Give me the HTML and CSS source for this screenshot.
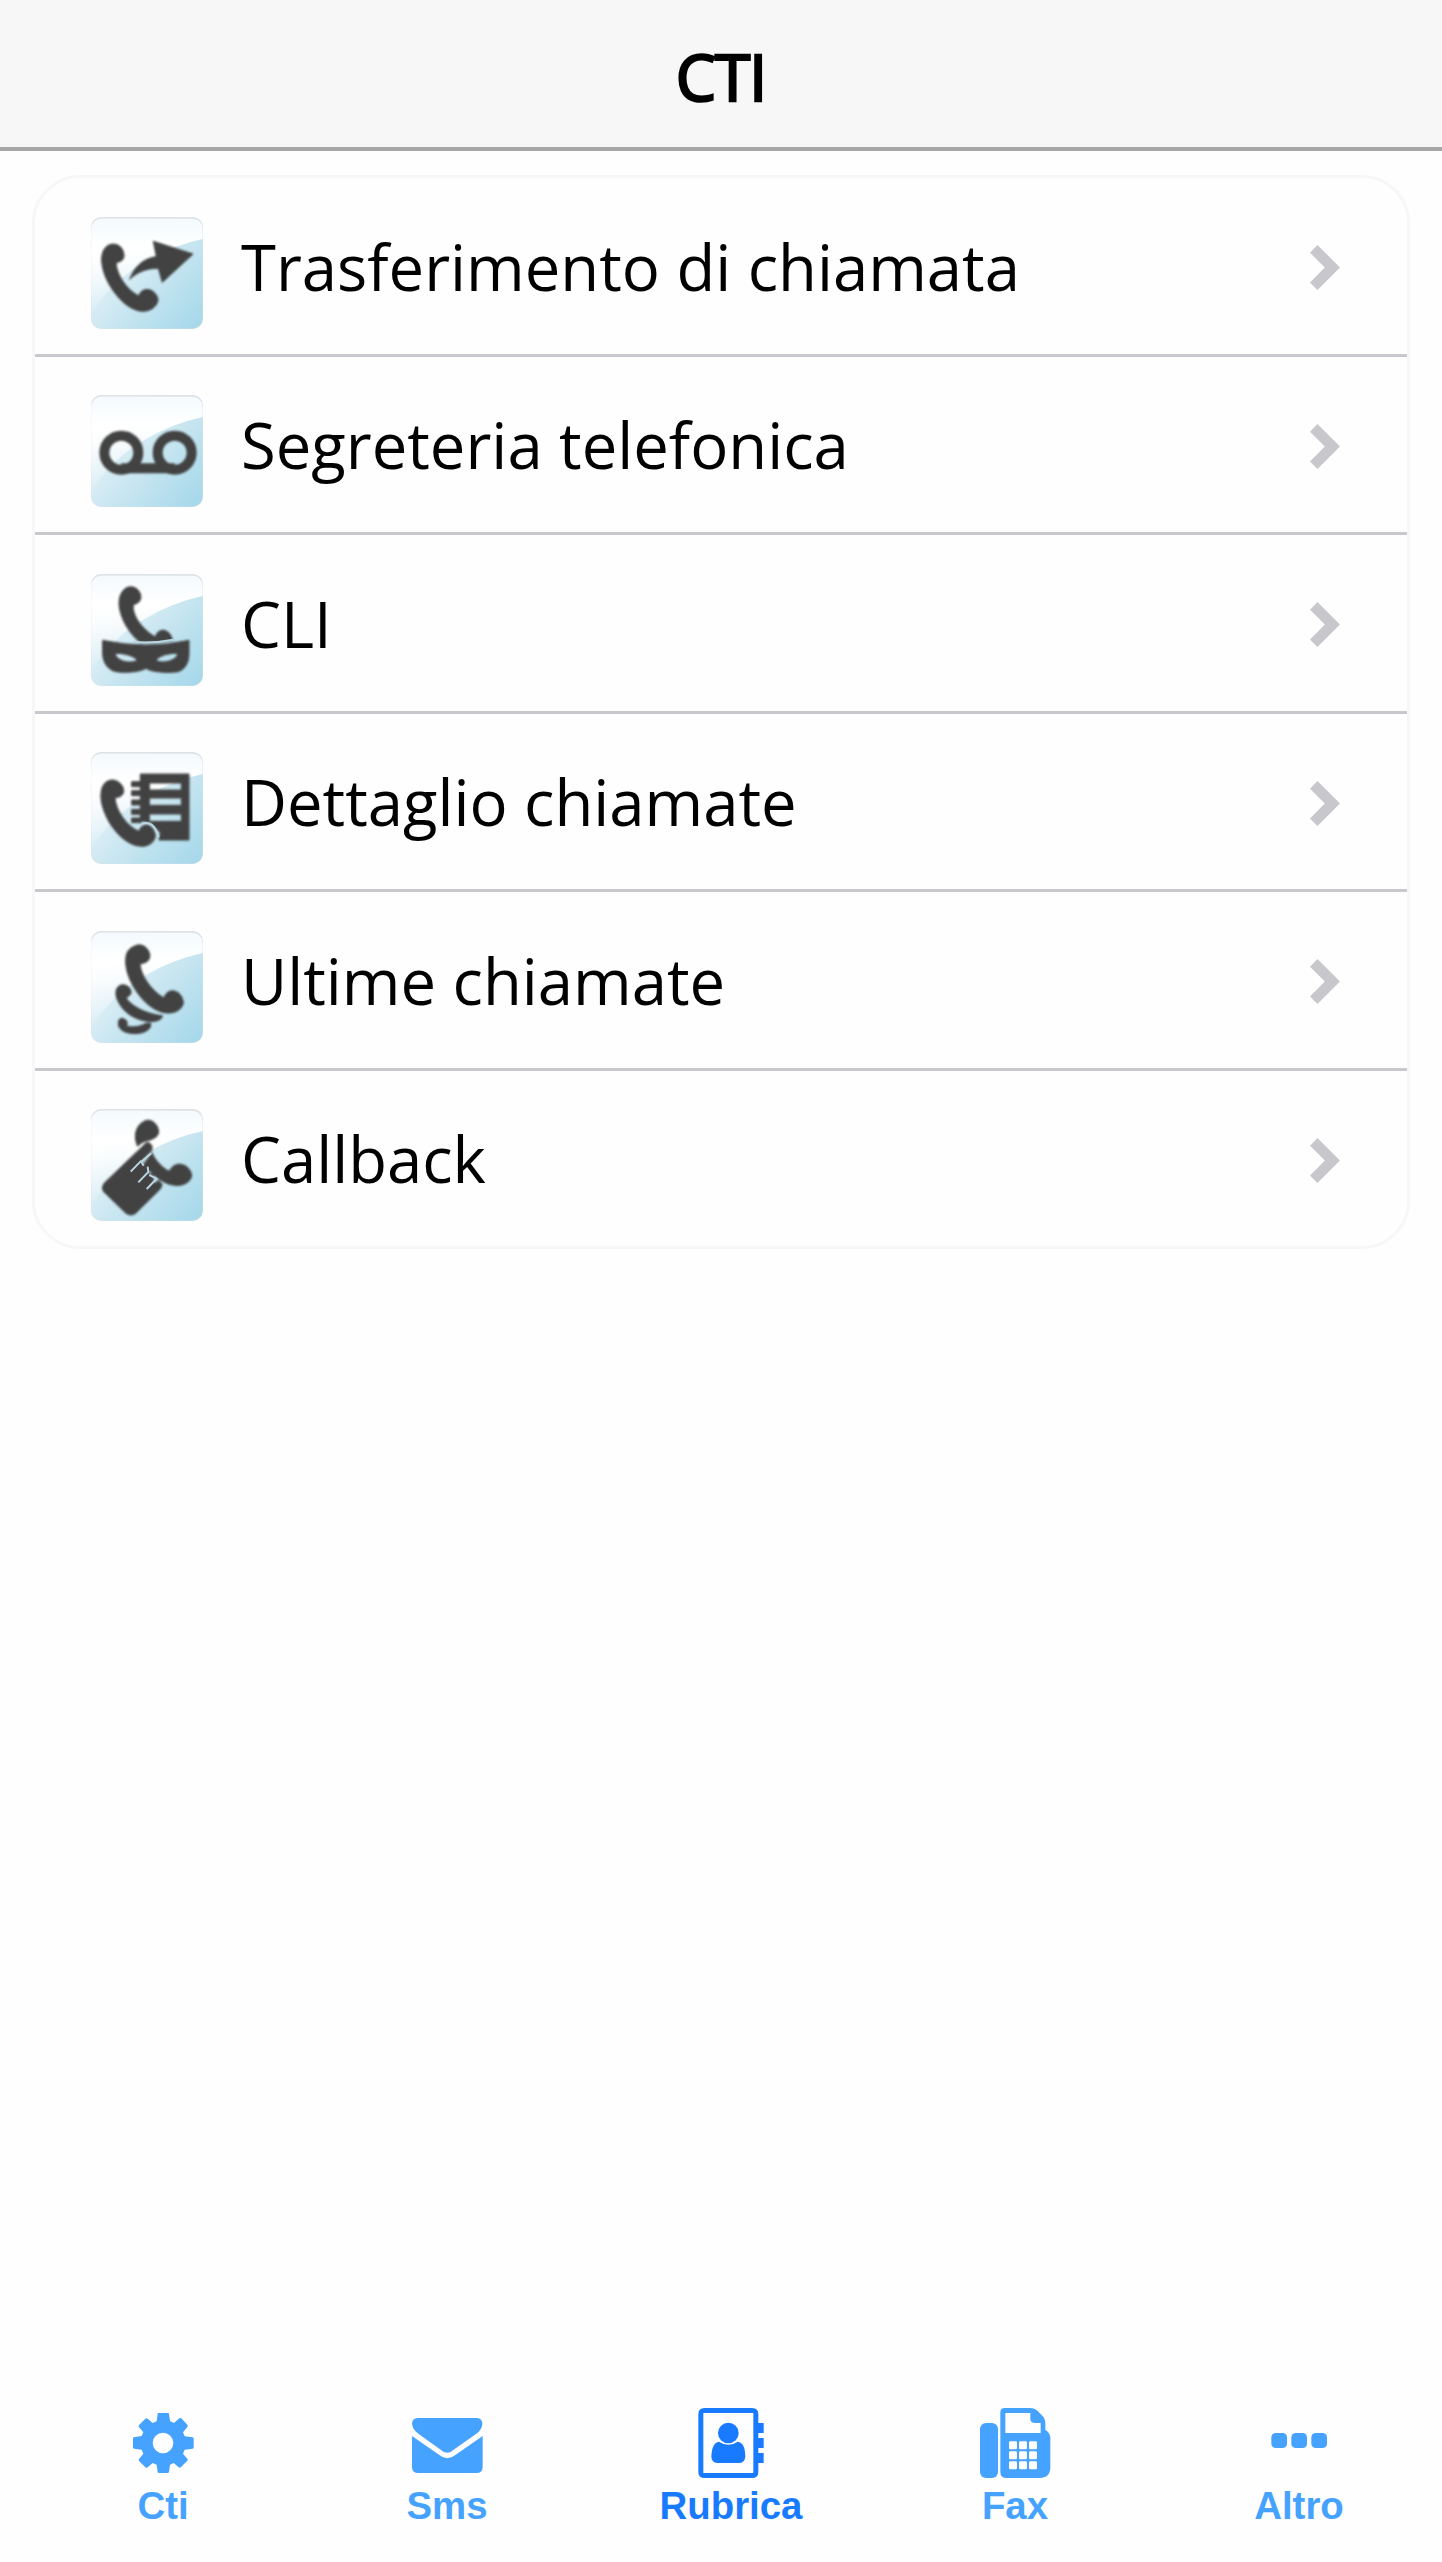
FILE: index.html
```html
<!DOCTYPE html>
<html lang="it">
<head>
    <meta charset="UTF-8">
    <meta name="viewport" content="width=device-width, initial-scale=1.0">
    <title>CTI</title>
    <link rel="stylesheet" href="styles.css">
</head>
<body>
    <!-- Sfondo comune delle icone -->
    <svg class="defs" width="0" height="0">
        <defs>
            <linearGradient id="sky" x1="0.1" y1="0.2" x2="1" y2="1">
                <stop offset="0" stop-color="#eef7fb"/>
                <stop offset="0.45" stop-color="#cbe7f1"/>
                <stop offset="1" stop-color="#a3d7ea"/>
            </linearGradient>
            <linearGradient id="gloss" x1="0" y1="0" x2="0" y2="1">
                <stop offset="0" stop-color="#f4fafd"/>
                <stop offset="0.3" stop-color="#fff"/>
                <stop offset="0.45" stop-color="#fff" stop-opacity="0.85"/>
                <stop offset="1" stop-color="#fff" stop-opacity="0"/>
            </linearGradient>
            <symbol id="tile" viewBox="33 37 336 336">
                <rect x="33" y="37" width="336" height="336" rx="30" fill="#dfe3e5"/>
                <rect x="34" y="42" width="334" height="330" rx="32" fill="url(#sky)"/>
                <path d="M34 74Q36 42 66 42H336Q366 42 368 74V103Q280 122 200 168Q90 230 34 330Z" fill="url(#gloss)"/>
            </symbol>
            <symbol id="chevron" viewBox="331 286 89 134">
                <path d="M353 286L420 353L353 420L331 398L375 353L331 309Z"/>
            </symbol>
        </defs>
    </svg>

    <header class="header">
        <h1>CTI</h1>
    </header>

    <!-- Menu principale -->
    <ul class="menu">
        <li>
            <svg class="icon" viewBox="33 37 336 336">
                <use href="#tile" x="33" y="37" width="336" height="336"/>
                <g class="glyph">
                    <path d="M89 120C100 116 113 119 121 126C130 135 134 150 131 160C128 168 120 172 108 174C110 210 140 256 177 274C180 258 194 252 208 255C222 258 234 274 234 286C232 304 214 319 190 320C155 320 120 290 94 250C75 220 64 188 65 160C66 140 76 124 89 120Z"/>
                    <path d="M220 110L339 148L247 233L235 191C202 190 170 203 149 224C163 186 190 161 229 156Z"/>
                </g>
            </svg>
            <span>Trasferimento di chiamata</span>
            <svg class="chevron"><use href="#chevron"/></svg>
        </li>
        <li>
            <svg class="icon" viewBox="33 37 336 336">
                <use href="#tile" x="33" y="37" width="336" height="336"/>
                <g class="glyph-line">
                    <circle cx="124" cy="210" r="51" stroke-width="30"/>
                    <circle cx="284" cy="210" r="51" stroke-width="30"/>
                    <path d="M124 257H284" stroke-width="30"/>
                </g>
            </svg>
            <span>Segreteria telefonica</span>
            <svg class="chevron"><use href="#chevron"/></svg>
        </li>
        <li>
            <svg class="icon" viewBox="33 37 336 336">
                <use href="#tile" x="33" y="37" width="336" height="336"/>
                <g class="glyph">
                    <path d="M142 77C158 71 175 80 181 96C186 112 180 124 160 129C156 160 185 202 226 226C230 209 245 202 257 207C268 212 275 222 277 235Q225 243 179 241C145 213 123 171 118 137C114 108 124 85 142 77Z"/>
                    <path fill-rule="evenodd" d="M68 236Q198 264 327 236V275C327 306 312 328 289 331C260 334 215 332 198 320C181 332 132 334 108 330C84 325 69 304 68 276ZM105 276C118 273 160 279 172 296C152 307 112 300 105 276ZM228 296C240 278 280 273 294 276C286 300 246 306 228 296Z"/>
                </g>
                <path class="gap" d="M160 241Q220 246 280 234"/>
            </svg>
            <span>CLI</span>
            <svg class="chevron"><use href="#chevron"/></svg>
        </li>
        <li>
            <svg class="icon" viewBox="33 37 336 336">
                <use href="#tile" x="33" y="37" width="336" height="336"/>
                <g class="glyph">
                    <path fill-rule="evenodd" d="M181 103H327V301H237L241 280L213 249L181 243ZM208 130V151H304V130ZM208 175V197H304V175ZM208 223V245H304V223Z"/>
                    <path d="M155 126H185V141H155ZM155 153H185V168H155ZM155 181H185V196H155ZM155 209H185V224H155ZM155 235H185V249H155Z"/>
                    <path d="M89 122C106 117 127 130 131 150C132 164 124 173 105 174C107 210 138 258 177 275C181 260 192 254 204 256C216 260 225 274 226 288C225 306 208 320 186 320C148 320 113 288 89 250C70 216 61 187 63 162C64 140 74 126 89 122Z"/>
                </g>
                <path class="gap" d="M184 252Q222 240 236 293"/>
            </svg>
            <span>Dettaglio chiamate</span>
            <svg class="chevron"><use href="#chevron"/></svg>
        </li>
        <li>
            <svg class="icon" viewBox="33 37 336 336">
                <use href="#tile" x="33" y="37" width="336" height="336"/>
                <g class="glyph">
                    <path d="M164 82C181 73 202 82 209 105C212 124 202 132 180 136C182 168 212 215 252 238C257 221 270 213 286 218C301 223 309 238 310 253C307 272 285 285 260 283C221 280 184 244 163 208C142 174 134 140 138 113C141 96 151 87 164 82Z"/>
                    <path d="M123 199C141 195 158 211 152 227L139 238C151 260 197 286 247 291C246 306 225 311 196 307C160 301 128 278 115 249C102 225 107 204 123 199Z"/>
                    <path d="M124 299C139 300 145 311 140 322C158 328 184 323 197 314L212 313C216 331 195 344 167 345C135 345 115 333 115 315C115 305 118 300 124 299Z"/>
                </g>
            </svg>
            <span>Ultime chiamate</span>
            <svg class="chevron"><use href="#chevron"/></svg>
        </li>
        <li>
            <svg class="icon" viewBox="33 37 336 336">
                <use href="#tile" x="33" y="37" width="336" height="336"/>
                <g class="glyph">
                    <path d="M194 73C211 64 234 80 236 104C236 119 223 126 207 131C194 133 181 139 173 149C160 122 165 86 194 73Z"/>
                    <path d="M199 138Q209 136 216 147L216 160L184 194L190 206L202 204L207 235L218 231L222 262L235 251L246 262Q246 272 239 279L168 349Q153 361 137 349L72 286Q62 274 73 259Z"/>
                    <path d="M216 168C224 188 244 212 268 224C276 207 291 199 307 204C323 207 334 223 335 237C332 257 308 269 284 266C252 263 216 237 192 201Z"/>
                </g>
                <path class="gap" d="M214 170L184 195L191 207M184 192L152 225M203 210L205 226L175 257M208 235L230 246L200 277"/>
            </svg>
            <span>Callback</span>
            <svg class="chevron"><use href="#chevron"/></svg>
        </li>
    </ul>

    <!-- Barra di navigazione -->
    <nav class="tabbar">
        <a class="tab">
            <svg viewBox="84 84 210 210">
                <path fill-rule="evenodd" d="M174 99H204Q207 99 207 102L210 123L222 129L238 115Q241 113 244 115L262 134Q265 138 262 141L249 157L254 169L278 172Q281 173 281 176V202Q281 206 278 206L254 209L249 221L262 236Q265 239 262 242L243 261Q239 265 236 262L221 249L210 254L207 276Q206 279 203 279H177Q174 279 173 276L170 254L158 249L143 262Q140 265 136 262L118 244Q114 240 117 237L130 221L125 209L102 206Q99 205 99 202V175Q99 172 102 172L125 168L130 157L116 140Q115 137 118 134L136 116Q140 113 143 116L158 129L170 124L173 102Q173 99 174 99ZM189 158A31 31 0 1 0 189 220A31 31 0 1 0 189 158Z"/>
            </svg>
            <span>Cti</span>
        </a>
        <a class="tab">
            <svg viewBox="936 84 210 210">
                <path d="M953 114H1131Q1147 115 1147 132Q1146 149 1129 161L1061 209Q1042 228 1022 209L955 161Q937 147 936 131Q937 115 953 114Z"/>
                <path d="M936 168L1017 224Q1042 245 1067 224L1148 168V260Q1148 279 1129 279H955Q936 279 936 260Z"/>
            </svg>
            <span>Sms</span>
        </a>
        <a class="tab active">
            <svg viewBox="168 84 210 210">
                <path fill-rule="evenodd" d="M194 84H336Q355 84 355 103V129H371V159H355V174H371V204H355V219H371V249H355V275Q355 294 336 294H194Q175 294 175 275V103Q175 84 194 84ZM190 99V279H340V99Z"/>
                <circle cx="265" cy="159" r="31"/>
                <path d="M237 185Q265 204 293 185Q315 187 316 229Q315 249 298 249H232Q214 248 214 229Q216 187 237 185Z"/>
            </svg>
            <span>Rubrica</span>
        </a>
        <a class="tab">
            <svg viewBox="1020 84 210 210">
                <rect x="1020" y="129" width="54" height="165" rx="18"/>
                <path fill-rule="evenodd" d="M1094 84H1170Q1184 84 1193 93L1207 107Q1216 116 1216 130V149Q1231 159 1231 174V261Q1231 294 1198 294H1100Q1081 294 1081 275V97Q1081 84 1094 84ZM1096 99V159H1202V129H1183Q1171 128 1171 117V99Z"/>
                <g class="keys">
                    <rect x="1107" y="184" width="24" height="24" rx="4"/>
                    <rect x="1137" y="184" width="24" height="24" rx="4"/>
                    <rect x="1167" y="184" width="24" height="24" rx="4"/>
                    <rect x="1107" y="214" width="24" height="24" rx="4"/>
                    <rect x="1137" y="214" width="24" height="24" rx="4"/>
                    <rect x="1167" y="214" width="24" height="24" rx="4"/>
                    <rect x="1107" y="244" width="24" height="24" rx="4"/>
                    <rect x="1137" y="244" width="24" height="24" rx="4"/>
                    <rect x="1167" y="244" width="24" height="24" rx="4"/>
                </g>
            </svg>
            <span>Fax</span>
        </a>
        <a class="tab">
            <svg viewBox="192 84 210 210">
                <rect x="214" y="159" width="47" height="45" rx="13"/>
                <rect x="274" y="159" width="47" height="45" rx="13"/>
                <rect x="334" y="159" width="47" height="45" rx="13"/>
            </svg>
            <span>Altro</span>
        </a>
    </nav>
</body>
</html>
```
FILE: styles.css
```css
* {
    box-sizing: border-box;
}

body {
    margin: 0;
    padding: 0;
    min-height: 100vh;
    display: flex;
    flex-direction: column;
    background-color: #fefefe;
    font-family: 'Open Sans', sans-serif;
    color: #000;
}

.defs {
    position: absolute;
}

.header {
    height: 151px;
    background-color: #f7f7f7;
    border-bottom: 3.5px solid #a7a7a7;
    box-shadow: inset 0 -1px 0 #a7a7a7;
    display: flex;
    justify-content: center;
    align-items: center;
}

.header h1 {
    margin: 0;
    padding-top: 6px;
    font-size: 64px;
    line-height: 90px;
    font-weight: 400;
    letter-spacing: -1px;
    -webkit-text-stroke: 2.5px #000;
}

.menu {
    list-style: none;
    margin: 24px 32px 0;
    padding: 0;
    border: 3px solid #f7f7f7;
    border-radius: 48px;
}

.menu li {
    display: flex;
    align-items: center;
    height: 178.5px;
    padding: 0 67px 0 56px;
    border-bottom: 3px solid #c8c7cc;
    font-size: 63.4px;
    line-height: 90px;
}

.menu li:last-child {
    height: 175.5px;
    border-bottom: none;
}

.menu li span {
    flex: 1;
    margin-left: 38px;
    padding-top: 2px;
}

.icon {
    width: 112px;
    height: 112px;
    margin-top: 14px;
}

.glyph,
.glyph-line {
    fill: #424242;
    stroke: #424242;
    stroke-width: 3;
    filter: blur(3px);
}

.glyph-line {
    fill: none;
}

.gap {
    fill: none;
    stroke: #b9d5df;
    stroke-width: 6;
    filter: blur(2px);
}

.chevron {
    width: 30px;
    height: 45px;
    margin-top: 4px;
    fill: #c8c7cc;
}

.tabbar {
    margin-top: auto;
    padding: 0 0 34px 21px;
    display: flex;
}

.tab {
    width: 284px;
    display: flex;
    flex-direction: column;
    align-items: center;
    color: #45a3ff;
    font-family: 'Liberation Sans', Arial, sans-serif;
    font-size: 38.4px;
    line-height: 44px;
    font-weight: bold;
}

.tab svg {
    width: 70px;
    height: 70px;
    margin-bottom: 6px;
    fill: currentColor;
    overflow: visible;
}

.tab .keys {
    fill: #fefefe;
}

.tab.active {
    color: #187bff;
}
```
